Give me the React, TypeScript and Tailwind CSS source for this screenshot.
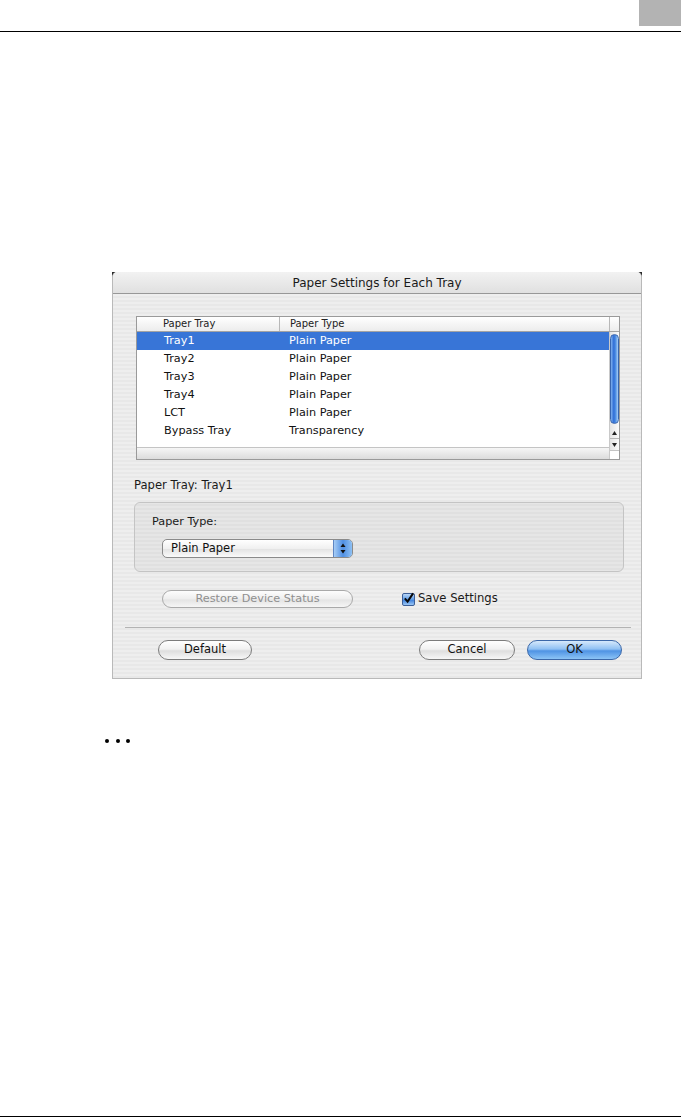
const rows = [
  { tray: "Tray1", type: "Plain Paper" },
  { tray: "Tray2", type: "Plain Paper" },
  { tray: "Tray3", type: "Plain Paper" },
  { tray: "Tray4", type: "Plain Paper" },
  { tray: "LCT", type: "Plain Paper" },
  { tray: "Bypass Tray", type: "Transparency" },
];

const AquaButton = ({ label, w, blue }: { label: string; w: string; blue?: boolean }) => (
  <button
    className={`${w} h-[20px] rounded-full border text-[11.5px] text-[#111] leading-none flex items-center justify-center ${
      blue
        ? "border-[#3b67a8] bg-[linear-gradient(to_bottom,#d6e9fc_0%,#8fc0f3_45%,#4f93e4_55%,#8cc4f6_100%)]"
        : "border-[#7c7c7c] bg-[linear-gradient(to_bottom,#ffffff_0%,#f1f1f1_45%,#dedede_55%,#f7f7f7_100%)]"
    }`}
  >
    {label}
  </button>
);

export default function App() {
  return (
    <div className="relative w-[683px] h-[1118px] bg-white flex flex-col font-['DejaVu_Sans',sans-serif] text-[#111]">
      {/* page header */}
      <div className="flex justify-end pr-[2px]">
        <div className="w-[42px] h-[26px] bg-[#b3b3b3]" />
      </div>
      <div className="mt-[5px] w-[681px] h-px bg-black" />

      {/* dialog */}
      <div className="mt-[240px] ml-[112px] w-[530px] bg-[#2b2b2b]">
        <div className="rounded-t-[5px] overflow-hidden border-x border-b border-[#b9b9b9] bg-[#ececec]">
          <div className="h-[22px] flex items-center justify-center bg-[linear-gradient(to_bottom,#f2f2f2,#e0e0e0)] border-b border-[#979797] text-[12px] text-[#1a1a1a]">
            Paper Settings for Each Tray
          </div>

          <div className="h-[384px] flex flex-col bg-[repeating-linear-gradient(to_bottom,#eeeeee_0px,#eeeeee_2px,#e8e8e8_2px,#e8e8e8_4px)]">
            {/* list */}
            <div className="mt-[22px] ml-[23px] w-[484px] h-[144px] border border-[#9a9a9a] bg-white flex flex-col">
              <div className="h-[15px] flex border-b border-[#a3a3a3] bg-[linear-gradient(to_bottom,#ffffff,#ececec)] text-[10px] text-[#222] leading-[14px]">
                <div className="w-[142px] pl-[26px]">Paper Tray</div>
                <div className="flex-1 border-l border-[#b8b8b8] pl-[10px]">Paper Type</div>
                <div className="w-[10px] border-l border-[#b8b8b8]" />
              </div>
              <div className="flex flex-1">
                <div className="flex-1 flex flex-col">
                  <div className="flex-1">
                    {rows.map((r, i) => (
                      <div
                        key={r.tray}
                        className={`h-[18px] flex items-center text-[11.25px] ${
                          i === 0 ? "bg-[#3875d7] text-white" : "text-[#111]"
                        }`}
                      >
                        <div className="w-[152px] pl-[27px]">{r.tray}</div>
                        <div>{r.type}</div>
                      </div>
                    ))}
                  </div>
                  <div className="h-[12px] border-t border-[#c4c4c4] bg-[linear-gradient(to_bottom,#f6f6f6,#dcdcdc)]" />
                </div>
                {/* vertical scrollbar */}
                <div className="w-[10px] flex flex-col border-l border-[#c9c9c9] bg-[linear-gradient(to_right,#e4e4e4,#fbfbfb)]">
                  <div className="mt-[2px] mx-auto w-[9px] h-[90px] rounded-full border border-[#3a66ad] bg-[linear-gradient(to_right,#7fb0ee,#2e6dd6_40%,#4f8fe4_65%,#a8d0f7)]" />
                  <div className="mt-[4px] h-[11px] flex items-center justify-center border-b border-[#b5b5b5]">
                    <svg width="5" height="4" viewBox="0 0 5 4">
                      <polygon points="2.5,0 5,4 0,4" fill="#222" />
                    </svg>
                  </div>
                  <div className="h-[11px] flex items-center justify-center">
                    <svg width="5" height="4" viewBox="0 0 5 4">
                      <polygon points="0,0 5,0 2.5,4" fill="#222" />
                    </svg>
                  </div>
                  <div className="flex-1 bg-white border-t border-[#c4c4c4]" />
                </div>
              </div>
            </div>

            <div className="mt-[18px] ml-[21px] h-[16px] flex items-center text-[11.6px] text-[#1a1a1a]">
              Paper Tray: Tray1
            </div>

            {/* group box */}
            <div className="mt-[8px] ml-[21px] w-[490px] h-[70px] rounded-[6px] border border-[#c4c4c4] bg-[#00000008] flex flex-col">
              <div className="mt-[12px] ml-[17px] h-[15px] flex items-center text-[11.25px] text-[#1a1a1a]">
                Paper Type:
              </div>
              <div className="mt-[9px] ml-[27px] w-[191px] h-[19px] rounded-[5px] border border-[#8a8a8a] overflow-hidden flex bg-[linear-gradient(to_bottom,#ffffff,#f0f0f0_50%,#e4e4e4_55%,#fafafa)]">
                <div className="flex-1 pl-[8px] flex items-center text-[11.5px] text-[#111]">Plain Paper</div>
                <div className="w-[19px] border-l border-[#5d86c4] flex items-center justify-center bg-[linear-gradient(to_right,#a6ccf5,#4f8fe3_50%,#8ec0f3)]">
                  <svg width="6" height="11" viewBox="0 0 6 11">
                    <polygon points="3,0.5 5.5,4 0.5,4" fill="#111" />
                    <polygon points="0.5,7 5.5,7 3,10.5" fill="#111" />
                  </svg>
                </div>
              </div>
            </div>

            {/* restore + checkbox */}
            <div className="mt-[18px] h-[18px] flex items-center">
              <div className="ml-[49px] w-[191px] h-[18px] rounded-full border border-[#a9a9a9] bg-[linear-gradient(to_bottom,#fdfdfd,#eeeeee_50%,#e4e4e4_55%,#f6f6f6)] flex items-center justify-center text-[11.25px] text-[#8f8f8f]">
                Restore Device Status
              </div>
              <div className="ml-[49px] w-[13px] h-[13px] rounded-[2px] border border-[#3c5f98] bg-[linear-gradient(to_bottom,#b9d7f8,#5d9be6_50%,#3e80dc_55%,#9cc8f5)] flex items-center justify-center">
                <svg width="12" height="12" viewBox="0 0 12 12" className="-mt-[2px]">
                  <path d="M2 6.5 L5 10 L11 1" fill="none" stroke="#0a0a0a" strokeWidth="2.2" />
                </svg>
              </div>
              <div className="ml-[3px] text-[11.6px] text-[#1a1a1a]">Save Settings</div>
            </div>

            <div className="mt-[19px] ml-[12px] w-[506px] h-px bg-[#b3b3b3]" />

            {/* footer buttons */}
            <div className="mt-[12px] flex items-center">
              <div className="ml-[45px]">
                <AquaButton label="Default" w="w-[94px]" />
              </div>
              <div className="ml-[167px]">
                <AquaButton label="Cancel" w="w-[96px]" />
              </div>
              <div className="ml-[12px]">
                <AquaButton label="OK" w="w-[95px]" blue />
              </div>
            </div>
          </div>
        </div>
      </div>

      {/* note dots */}
      <div className="mt-[60px] ml-[105px] flex gap-[6.5px]">
        <div className="w-[4px] h-[4px] rounded-full bg-black" />
        <div className="w-[4px] h-[4px] rounded-full bg-black" />
        <div className="w-[4px] h-[4px] rounded-full bg-black" />
      </div>

      <div className="mt-auto mb-[1px] w-[681px] h-px bg-black" />
    </div>
  );
}
